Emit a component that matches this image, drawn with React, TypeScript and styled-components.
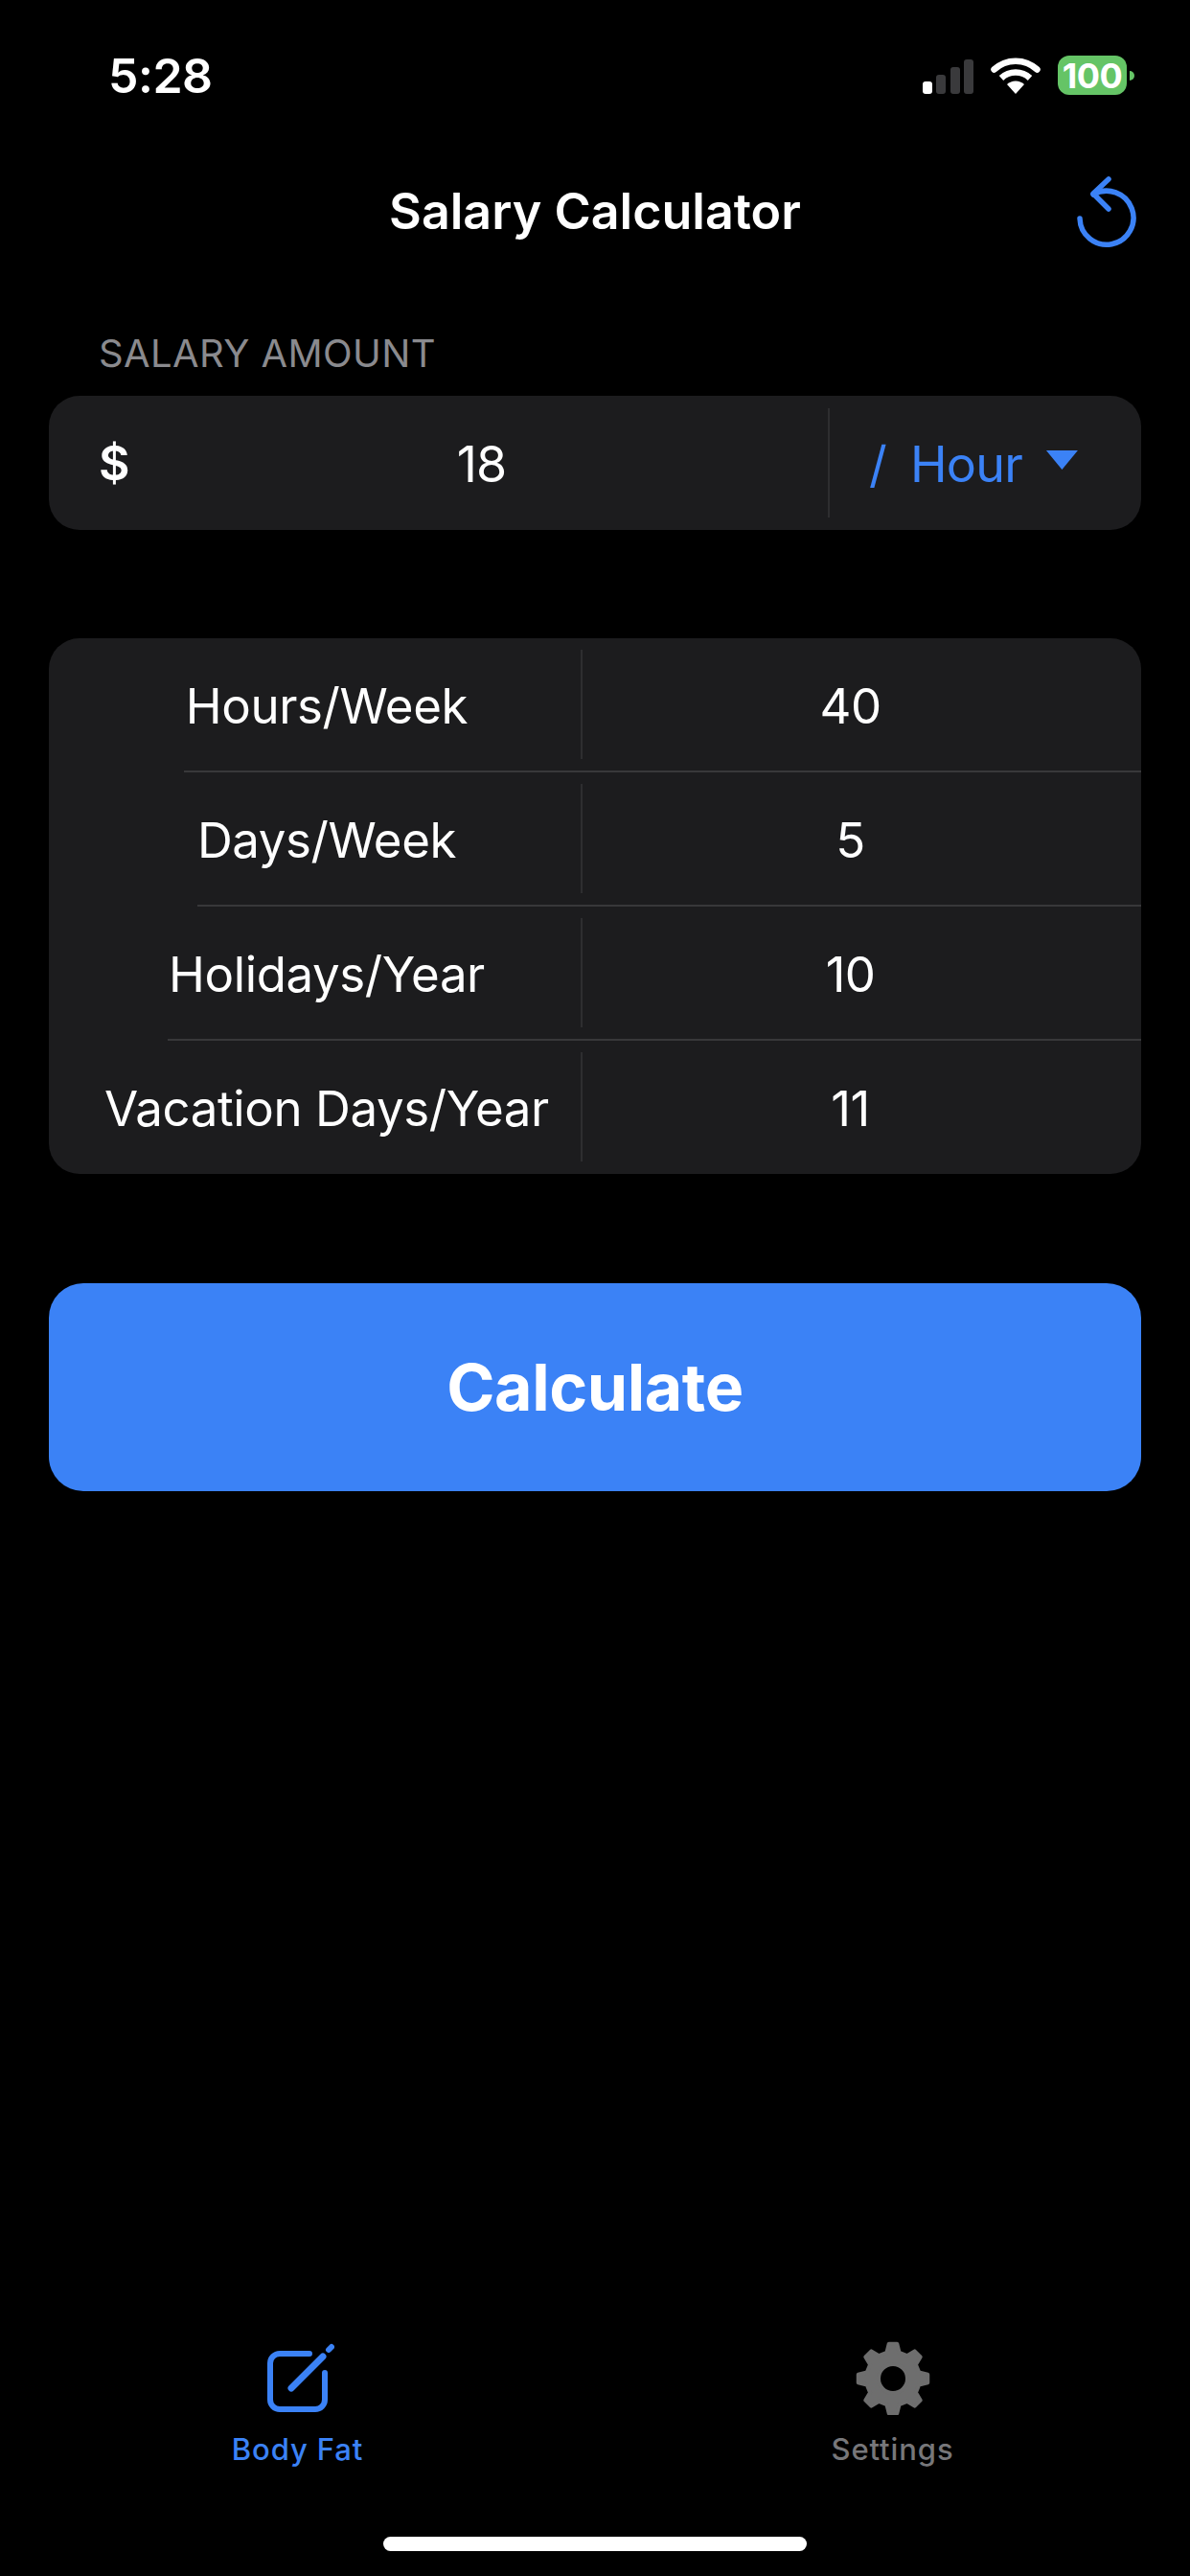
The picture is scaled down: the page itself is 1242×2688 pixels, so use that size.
import {createGlobalStyle, styled} from "styled-components";

const GlobalStyle = createGlobalStyle`
    html, body {
        margin: 0;
        padding: 0;
        background: #000;
    }
    * {
        box-sizing: border-box;
    }
`

const BLUE = "#3b82f6";

const Page = styled.div`
    display: flex;
    flex-direction: column;
    width: 1242px;
    height: 2688px;
    background: #000;
    color: #fff;
    font-family: Inter, "Liberation Sans", sans-serif;
`
//status bar start
const StatusBar = styled.div`
    display: flex;
    justify-content: space-between;
    align-items: flex-start;
    height: 150px;
    padding: 49px 58px 0 113px;
`
const Clock = styled.span`
    font-size: 50px;
    line-height: 60px;
    font-weight: 600;
    letter-spacing: -0.5px;
`
const StatusIcons = styled.div`
    display: flex;
    align-items: center;
    gap: 18px;
    padding-top: 9px;
`
const SignalBars = styled.div`
    display: flex;
    align-items: flex-end;
    gap: 4.5px;
    height: 36px;
    margin: 2px 0 0 0;
`
const SignalBar = styled.i<{ $h: number; $on?: boolean }>`
    display: block;
    width: 10px;
    height: ${(p) => p.$h}px;
    border-radius: 3px;
    background: ${(p) => (p.$on ? "#fff" : "#3a3a3c")};
`
const Battery = styled.div`
    display: flex;
    align-items: center;
    gap: 3px;
`
const BatteryBody = styled.div`
    display: flex;
    align-items: center;
    justify-content: center;
    width: 72px;
    height: 41px;
    border-radius: 12px;
    background: #65c466;
    font-size: 36px;
    font-weight: 700;
    letter-spacing: -0.5px;
`
const BatteryNub = styled.i`
    display: block;
    width: 5px;
    height: 10px;
    border-radius: 0 5px 5px 0;
    background: #65c466;
`
//status bar end

const NavBar = styled.header`
    display: grid;
    grid-template-columns: 1fr auto 1fr;
    align-items: center;
    height: 140px;
`
const Title = styled.h1`
    grid-column: 2;
    margin: 0;
    font-size: 52px;
    font-weight: 600;
    letter-spacing: 0;
`
const ResetButton = styled.button`
    justify-self: end;
    display: flex;
    margin: 3px 56px 0 0;
    padding: 0;
    border: none;
    background: none;
`

const Content = styled.main`
    display: flex;
    flex-direction: column;
    padding: 0 51px;
`
const SectionLabel = styled.div`
    padding: 54px 0 19px 52px;
    font-size: 40px;
    line-height: 50px;
    letter-spacing: 0.4px;
    color: #8a8a8e;
`
const Card = styled.section`
    display: flex;
    flex-direction: column;
    border-radius: 32px;
    background: #1c1c1e;
`
const AmountRow = styled.div`
    display: flex;
    align-items: center;
    height: 140px;
    padding: 13px 0;
`
const Dollar = styled.span`
    width: 100px;
    padding-left: 52px;
    font-size: 50px;
    font-weight: 600;
`
const AmountValue = styled.span`
    width: 713px;
    padding: 2px 10px 0 0;
    text-align: center;
    font-size: 52px;
    letter-spacing: -1px;
`
const VerticalLine = styled.div`
    align-self: stretch;
    width: 2px;
    background: #2e2e30;
`
const UnitPicker = styled.div`
    display: flex;
    align-items: center;
    padding: 2px 0 0 41px;
    color: ${BLUE};
    font-size: 52px;
    letter-spacing: -0.8px;
`
const UnitSlash = styled.span`
    margin-right: 25px;
`
const UnitCaret = styled.i`
    display: block;
    width: 33px;
    height: 20px;
    margin: -8px 0 0 25px;
    background: ${BLUE};
    clip-path: polygon(0 0, 100% 0, 50% 100%);
`
const SpacedCard = styled(Card)`
    margin-top: 113px;
    padding-bottom: 1px;
`
const Row = styled.div`
    display: flex;
    height: 138px;
    padding: 12px 0;
`
const RowLabel = styled.span`
    display: flex;
    align-items: center;
    justify-content: center;
    width: 555px;
    padding: 2px 0 0 25px;
    font-size: 51px;
    letter-spacing: -0.4px;
`
const RowValue = styled.span`
    display: flex;
    align-items: center;
    justify-content: center;
    flex: 1;
    padding: 2px 24px 0 0;
    font-size: 51px;
    letter-spacing: -0.6px;
`
const RowSeparator = styled.div<{ $inset: number }>`
    height: 2px;
    margin-left: ${(p) => p.$inset}px;
    background: #38383a;
`
const CalculateButton = styled.button`
    height: 217px;
    margin-top: 114px;
    padding-bottom: 2px;
    border: none;
    border-radius: 36px;
    background: ${BLUE};
    color: #fff;
    font-family: inherit;
    font-size: 68px;
    font-weight: 700;
    letter-spacing: -0.4px;
`

//tab bar start
const TabBar = styled.nav`
    display: flex;
    margin-top: auto;
`
const Tab = styled.div<{ $active?: boolean }>`
    flex: 1;
    display: flex;
    flex-direction: column;
    align-items: center;
    color: ${(p) => (p.$active ? BLUE : "#77777a")};
    font-size: 31px;
    font-weight: 500;
    letter-spacing: 0.9px;
`
const TabIcon = styled.div`
    display: flex;
    align-items: flex-end;
    height: 78px;
    margin-bottom: 17px;
`
const HomeBar = styled.div`
    width: 442px;
    height: 15px;
    margin: 73px auto 26px;
    border-radius: 8px;
    background: #fff;
`
//tab bar end

const rows = [
    {label: "Hours/Week", value: "40", inset: 141},
    {label: "Days/Week", value: "5", inset: 155},
    {label: "Holidays/Year", value: "10", inset: 124},
    {label: "Vacation Days/Year", value: "11", inset: 0},
];

function gearPath(cx: number, cy: number, outer: number, inner: number, hole: number) {
    const teeth = 8;
    const pts: string[] = [];
    for (let i = 0; i < teeth; i++) {
        const a = (i / teeth) * Math.PI * 2 - Math.PI / 2;
        const step = (Math.PI * 2) / teeth;
        const corners: [number, number][] = [
            [inner, a - step * 0.3],
            [outer, a - step * 0.15],
            [outer, a + step * 0.15],
            [inner, a + step * 0.3],
        ];
        corners.forEach(([r, t]) => {
            pts.push(`${(cx + r * Math.cos(t)).toFixed(2)} ${(cy + r * Math.sin(t)).toFixed(2)}`);
        });
    }
    return `M${pts.join("L")}Z M${cx - hole} ${cy}a${hole} ${hole} 0 1 0 ${hole * 2} 0a${hole} ${hole} 0 1 0 ${-hole * 2} 0Z`;
}

export default function App() {
    return (
        <Page>
            <GlobalStyle/>
            <StatusBar>
                <Clock>5:28</Clock>
                <StatusIcons>
                    <SignalBars>
                        <SignalBar $h={13} $on/>
                        <SignalBar $h={20}/>
                        <SignalBar $h={28}/>
                        <SignalBar $h={36}/>
                    </SignalBars>
                    <svg width="52" height="38" viewBox="0 0 52 38">
                        <path d="M26 38 L17 28 A13 13 0 0 1 35 28Z" fill="#fff"/>
                        <path d="M11 21.5 A22 22 0 0 1 41 21.5" fill="none" stroke="#fff" strokeWidth="6.5"/>
                        <path d="M3.5 12.5 A33 33 0 0 1 48.5 12.5" fill="none" stroke="#fff" strokeWidth="6.5" strokeLinecap="round"/>
                    </svg>
                    <Battery>
                        <BatteryBody>100</BatteryBody>
                        <BatteryNub/>
                    </Battery>
                </StatusIcons>
            </StatusBar>

            <NavBar>
                <Title>Salary Calculator</Title>
                <ResetButton aria-label="reset">
                    <svg width="62" height="76" viewBox="0 0 62 76" fill="none" stroke={BLUE} strokeWidth="5.5" strokeLinecap="round" strokeLinejoin="round">
                        <path d="M17 19 A28 28 0 1 1 3 44"/>
                        <path d="M33 3 L17 18 L33 34"/>
                    </svg>
                </ResetButton>
            </NavBar>

            <Content>
                <SectionLabel>SALARY AMOUNT</SectionLabel>
                <Card>
                    <AmountRow>
                        <Dollar>$</Dollar>
                        <AmountValue>18</AmountValue>
                        <VerticalLine/>
                        <UnitPicker>
                            <UnitSlash>/</UnitSlash>
                            Hour
                            <UnitCaret/>
                        </UnitPicker>
                    </AmountRow>
                </Card>

                <SpacedCard>
                    {rows.map((r, i) => (
                        <div key={r.label}>
                            <Row>
                                <RowLabel>{r.label}</RowLabel>
                                <VerticalLine/>
                                <RowValue>{r.value}</RowValue>
                            </Row>
                            {i < rows.length - 1 && <RowSeparator $inset={r.inset}/>}
                        </div>
                    ))}
                </SpacedCard>

                <CalculateButton>Calculate</CalculateButton>
            </Content>

            <TabBar>
                <Tab $active>
                    <TabIcon>
                        <svg width="76" height="78" viewBox="-4 -2 76 78" fill="none" stroke={BLUE} strokeLinecap="round">
                            <path d="M46 12 H15 a10 10 0 0 0 -10 10 V60 a10 10 0 0 0 10 10 H52 a10 10 0 0 0 10 -10 V32" strokeWidth="6"/>
                            <path d="M27 48 L60 15" strokeWidth="7"/>
                            <path d="M66 8 L69 5" strokeWidth="6"/>
                        </svg>
                    </TabIcon>
                    Body Fat
                </Tab>
                <Tab>
                    <TabIcon>
                        <svg width="78" height="78" viewBox="0 0 78 78">
                            <path d={gearPath(39, 40, 36.5, 28, 15)} fill="#6e6e6e" fillRule="evenodd" stroke="#6e6e6e" strokeWidth="4" strokeLinejoin="round"/>
                        </svg>
                    </TabIcon>
                    Settings
                </Tab>
            </TabBar>
            <HomeBar/>
        </Page>
    )
}
